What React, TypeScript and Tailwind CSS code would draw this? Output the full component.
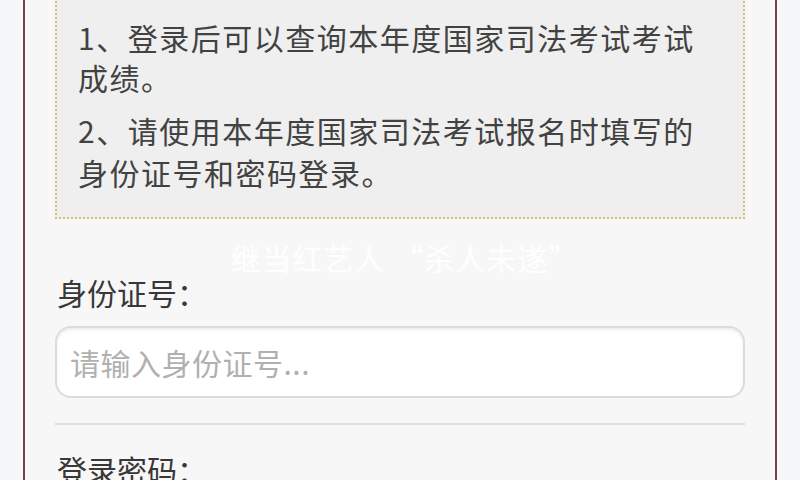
import React from 'react';

const font = { fontFamily: '"Noto Sans CJK SC", "Noto Sans", sans-serif' };

export default function App() {
  return (
    <div className="w-[800px] h-[480px] overflow-hidden bg-[#f6f7f8] px-[23px]" style={font}>
      <div className="h-full flow-root border-x-2 border-[#7d3f50] bg-[#f7f7f7] px-[30px]">
        {/* notice box */}
        <div className="-mt-[20px] border-2 border-dotted border-[#cfc27f] bg-[#efefef] pl-[21px] pr-4 pt-[35px] pb-[24px] text-[30px] leading-[40px] tracking-[1.5px] text-[#424242]">
          <p>
            1、登录后可以查询本年度国家司法考试考试
            <br />
            成绩。
          </p>
          <p className="mt-[12px] leading-[42px]">
            2、请使用本年度国家司法考试报名时填写的
            <br />
            身份证号和密码登录。
          </p>
        </div>

        {/* watermark */}
        <div className="h-[53px] flex items-end justify-center text-[30px] leading-[30px] text-white/90 tracking-[1px] pl-[10px]">
          继当红艺人 “杀人未遂”
        </div>

        <label className="block text-[30px] leading-[40px] text-[#383838] pl-[2px]">身份证号：</label>
        <div className="mt-[14px] h-[72px] rounded-[16px] border-2 border-[#dcdcdc] bg-white shadow-[inset_0_2px_3px_rgba(0,0,0,0.08)] flex items-center px-[13px]">
          <span className="text-[30px] text-[#b0b0b0] tracking-[0.5px]">请输入身份证号...</span>
        </div>

        <div className="mt-[25px] border-t-2 border-[#dedede]" />

        <label className="block mt-[24px] text-[30px] leading-[40px] text-[#383838] pl-[2px]">登录密码：</label>
      </div>
    </div>
  );
}
